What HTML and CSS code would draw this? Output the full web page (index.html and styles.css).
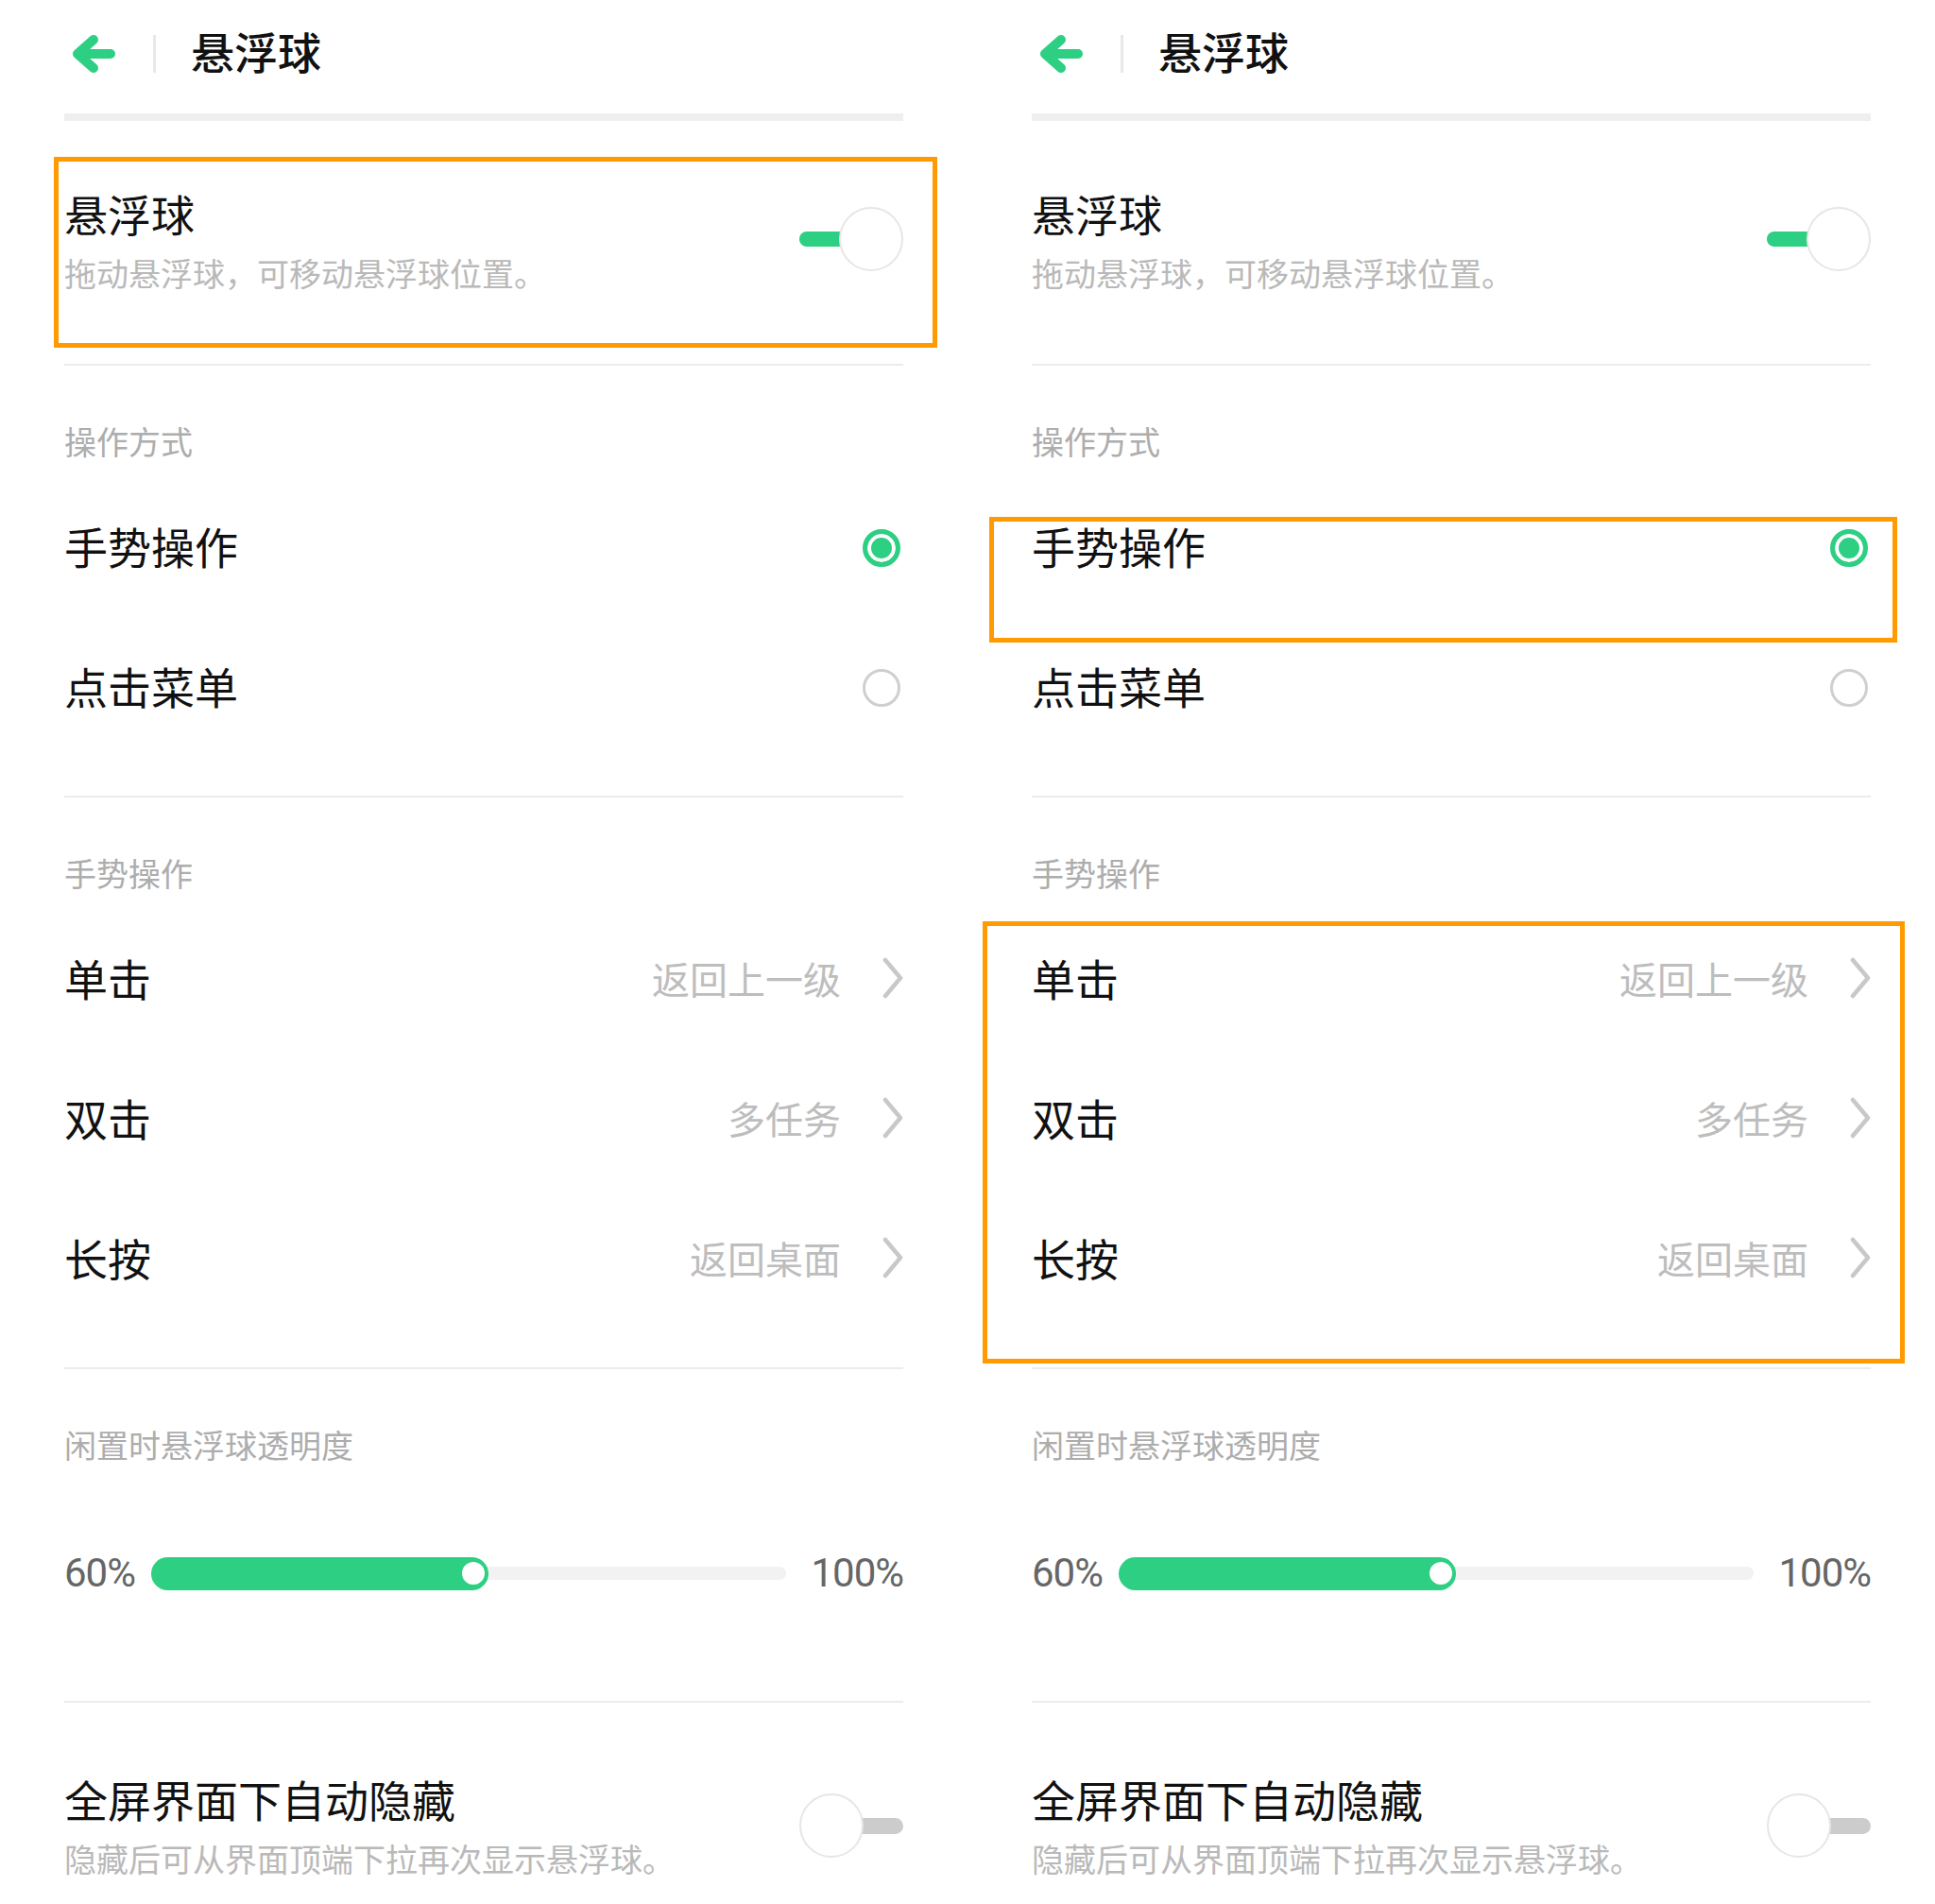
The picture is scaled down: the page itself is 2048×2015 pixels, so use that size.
FILE: index.html
```html
<!DOCTYPE html>
<html lang="zh-CN">
<head>
<meta charset="utf-8">
<title>悬浮球</title>
<link rel="stylesheet" href="styles.css">
</head>
<body>
<div class="panel">
  <div class="topbar">
    <svg class="back" viewBox="0 0 60 50" width="60" height="50"><path d="M27 10 L10 25 L27 40 M10 25 L45 25" fill="none" stroke="#2dcf83" stroke-width="10" stroke-linecap="round" stroke-linejoin="round"/></svg>
    <span class="vbar"></span>
    <span class="page-title">悬浮球</span>
  </div>
  <div class="thickline"></div>
  <div class="switch-row first">
    <div class="texts"><div class="title">悬浮球</div><div class="sub">拖动悬浮球，可移动悬浮球位置。</div></div>
    <div class="toggle on"><span class="track"></span><span class="thumb"></span></div>
  </div>
  <div class="divider"></div>
  <div class="section">
    <div class="section-label">操作方式</div>
    <div class="row"><span class="title">手势操作</span><span class="radio checked"></span></div>
    <div class="row"><span class="title">点击菜单</span><span class="radio"></span></div>
  </div>
  <div class="divider"></div>
  <div class="section">
    <div class="section-label">手势操作</div>
    <div class="row"><span class="title">单击</span><span class="end"><span class="value">返回上一级</span><svg class="chev" viewBox="0 0 26 44" width="26" height="44"><path d="M7 3 L23 22 L7 41" fill="none" stroke="#c8c8c8" stroke-width="4.5" stroke-linecap="round" stroke-linejoin="round"/></svg></span></div>
    <div class="row"><span class="title">双击</span><span class="end"><span class="value">多任务</span><svg class="chev" viewBox="0 0 26 44" width="26" height="44"><path d="M7 3 L23 22 L7 41" fill="none" stroke="#c8c8c8" stroke-width="4.5" stroke-linecap="round" stroke-linejoin="round"/></svg></span></div>
    <div class="row"><span class="title">长按</span><span class="end"><span class="value">返回桌面</span><svg class="chev" viewBox="0 0 26 44" width="26" height="44"><path d="M7 3 L23 22 L7 41" fill="none" stroke="#c8c8c8" stroke-width="4.5" stroke-linecap="round" stroke-linejoin="round"/></svg></span></div>
  </div>
  <div class="divider"></div>
  <div class="section slider-section">
    <div class="section-label">闲置时悬浮球透明度</div>
    <div class="slider-row">
      <span class="pct">60%</span>
      <div class="strack"><div class="fill" style="width:53.1%"><span class="knob"></span></div><div class="rest"></div></div>
      <span class="pct right">100%</span>
    </div>
  </div>
  <div class="divider"></div>
  <div class="switch-row last">
    <div class="texts"><div class="title">全屏界面下自动隐藏</div><div class="sub">隐藏后可从界面顶端下拉再次显示悬浮球。</div></div>
    <div class="toggle off"><span class="thumb"></span><span class="track"></span></div>
  </div>
  <div class="mark mark-switch"></div>
</div>

<div class="panel">
  <div class="topbar">
    <svg class="back" viewBox="0 0 60 50" width="60" height="50"><path d="M27 10 L10 25 L27 40 M10 25 L45 25" fill="none" stroke="#2dcf83" stroke-width="10" stroke-linecap="round" stroke-linejoin="round"/></svg>
    <span class="vbar"></span>
    <span class="page-title">悬浮球</span>
  </div>
  <div class="thickline"></div>
  <div class="switch-row first">
    <div class="texts"><div class="title">悬浮球</div><div class="sub">拖动悬浮球，可移动悬浮球位置。</div></div>
    <div class="toggle on"><span class="track"></span><span class="thumb"></span></div>
  </div>
  <div class="divider"></div>
  <div class="section">
    <div class="section-label">操作方式</div>
    <div class="row"><span class="title">手势操作</span><span class="radio checked"></span></div>
    <div class="row"><span class="title">点击菜单</span><span class="radio"></span></div>
  </div>
  <div class="divider"></div>
  <div class="section">
    <div class="section-label">手势操作</div>
    <div class="row"><span class="title">单击</span><span class="end"><span class="value">返回上一级</span><svg class="chev" viewBox="0 0 26 44" width="26" height="44"><path d="M7 3 L23 22 L7 41" fill="none" stroke="#c8c8c8" stroke-width="4.5" stroke-linecap="round" stroke-linejoin="round"/></svg></span></div>
    <div class="row"><span class="title">双击</span><span class="end"><span class="value">多任务</span><svg class="chev" viewBox="0 0 26 44" width="26" height="44"><path d="M7 3 L23 22 L7 41" fill="none" stroke="#c8c8c8" stroke-width="4.5" stroke-linecap="round" stroke-linejoin="round"/></svg></span></div>
    <div class="row"><span class="title">长按</span><span class="end"><span class="value">返回桌面</span><svg class="chev" viewBox="0 0 26 44" width="26" height="44"><path d="M7 3 L23 22 L7 41" fill="none" stroke="#c8c8c8" stroke-width="4.5" stroke-linecap="round" stroke-linejoin="round"/></svg></span></div>
  </div>
  <div class="divider"></div>
  <div class="section slider-section">
    <div class="section-label">闲置时悬浮球透明度</div>
    <div class="slider-row">
      <span class="pct">60%</span>
      <div class="strack"><div class="fill" style="width:53.1%"><span class="knob"></span></div><div class="rest"></div></div>
      <span class="pct right">100%</span>
    </div>
  </div>
  <div class="divider"></div>
  <div class="switch-row last">
    <div class="texts"><div class="title">全屏界面下自动隐藏</div><div class="sub">隐藏后可从界面顶端下拉再次显示悬浮球。</div></div>
    <div class="toggle off"><span class="thumb"></span><span class="track"></span></div>
  </div>
  <div class="mark mark-radio"></div>
  <div class="mark mark-gestures"></div>
</div>
</body>
</html>
```

FILE: styles.css
```css
html, body {
  margin: 0;
  padding: 0;
  background: #ffffff;
}
body {
  width: 2048px;
  height: 2015px;
  overflow: hidden;
  display: flex;
  font-family: "Noto Sans CJK SC", "Noto Sans", sans-serif;
  color: #111111;
}
.panel {
  position: relative;
  width: 1024px;
  flex: none;
  box-sizing: border-box;
  padding: 0 68px;
}

/* top bar */
.topbar {
  height: 114px;
  margin-bottom: 6px;
  display: flex;
  align-items: center;
}
.back {
  display: block;
  margin-left: 4px;
  margin-right: 30px;
  flex: none;
}
.vbar {
  width: 3px;
  height: 40px;
  background: #e8e8e8;
  margin-right: 37px;
  flex: none;
}
.page-title {
  font-size: 46px;
  line-height: 62px;
  font-weight: 500;
  color: #111111;
  margin-bottom: 8px;
}
.thickline {
  height: 8px;
  background: #efefef;
}

/* switch rows */
.switch-row {
  display: flex;
  justify-content: space-between;
  align-items: flex-start;
}
.switch-row.first {
  padding: 66px 0 71px;
}
.switch-row.last {
  padding: 70px 0 0;
}
.switch-row.first .toggle { margin-top: 25px; }
.switch-row.last .toggle { margin-top: 26px; }
.texts .title {
  font-size: 46px;
  line-height: 62px;
  color: #111111;
}
.texts .sub {
  margin-top: 8px;
  font-size: 34px;
  line-height: 50px;
  color: #b9b9b9;
}

.divider {
  height: 2px;
  background: #ececec;
}

/* sections */
.section {
  padding-bottom: 39px;
}
.section-label {
  margin-top: 55px;
  margin-bottom: 15px;
  font-size: 34px;
  line-height: 50px;
  color: #adadad;
}
.row {
  height: 148px;
  display: flex;
  align-items: center;
  justify-content: space-between;
}
.row .title {
  font-size: 46px;
  line-height: 62px;
  color: #111111;
  margin-bottom: 8px;
}
.end {
  display: flex;
  align-items: center;
  margin-bottom: 6px;
}
.value {
  font-size: 40px;
  line-height: 54px;
  color: #bdbdbd;
}
.chev {
  display: block;
  margin-left: 40px;
  flex: none;
}

/* radio */
.radio {
  width: 40px;
  height: 40px;
  box-sizing: border-box;
  border-radius: 50%;
  border: 3.5px solid #cfcfcf;
  margin-right: 3px;
  margin-bottom: 2px;
  background: #ffffff;
}
.radio.checked {
  border: 5px solid #2dcf83;
  background: #2dcf83;
  box-shadow: inset 0 0 0 4px #ffffff;
}

/* toggle */
.toggle {
  display: flex;
  align-items: center;
  width: 110px;
  height: 68px;
}
.toggle .thumb {
  position: relative;
  z-index: 1;
  width: 68px;
  height: 68px;
  box-sizing: border-box;
  border-radius: 50%;
  border: 2px solid #e6e6e6;
  background: #ffffff;
  flex: none;
}
.toggle .track {
  width: 64px;
  flex: none;
}
.toggle.on .track {
  height: 16px;
  border-radius: 8px;
  background: #2dcf83;
  margin-right: -22px;
}
.toggle.off .track {
  height: 17px;
  border-radius: 8.5px;
  background: #cccccc;
  margin-left: -22px;
}

/* slider */
.slider-section {
  padding-bottom: 61px;
}
.slider-section .section-label {
  margin-bottom: 37px;
}
.slider-row {
  height: 148px;
  display: grid;
  grid-template-columns: 92px 1fr 124px;
  align-items: center;
}
.pct {
  font-family: Roboto, "Noto Sans", sans-serif;
  font-size: 42px;
  line-height: 50px;
  letter-spacing: -1px;
  color: #666666;
}
.pct.right {
  text-align: right;
}
.strack {
  display: flex;
  align-items: center;
  height: 35px;
}
.fill {
  position: relative;
  z-index: 1;
  flex: none;
  height: 35px;
  box-sizing: border-box;
  border-radius: 18px;
  background: #2dcf83;
  display: flex;
  align-items: center;
  justify-content: flex-end;
  padding-right: 4px;
}
.knob {
  width: 24px;
  height: 24px;
  border-radius: 50%;
  background: #ffffff;
}
.rest {
  flex: 1;
  height: 14px;
  border-radius: 7px;
  background: #f2f2f2;
  margin-left: -20px;
}

/* annotation boxes */
.mark {
  position: absolute;
  box-sizing: border-box;
  border: 5px solid #ff9a00;
  pointer-events: none;
}
.mark-switch {
  left: 57px;
  top: 166px;
  width: 935px;
  height: 202px;
}
.mark-radio {
  left: 23px;
  top: 547px;
  width: 961px;
  height: 133px;
}
.mark-gestures {
  left: 16px;
  top: 975px;
  width: 976px;
  height: 468px;
}
```
